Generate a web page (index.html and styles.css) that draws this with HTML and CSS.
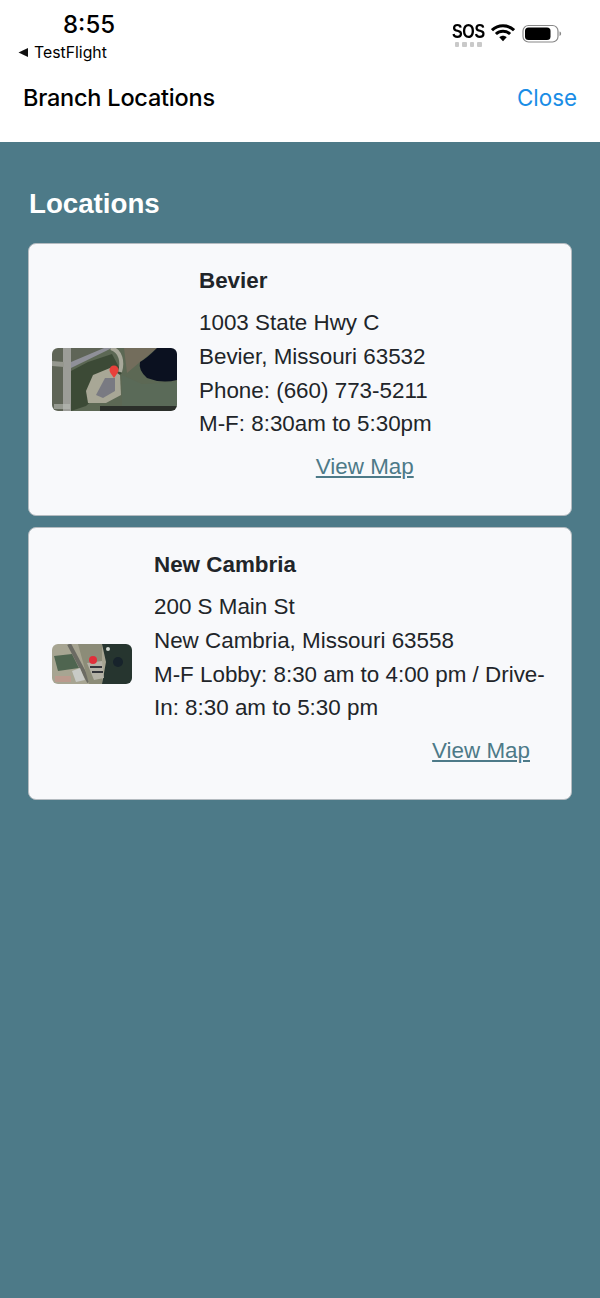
FILE: index.html
```html
<!DOCTYPE html>
<html lang="en">
<head>
<meta charset="utf-8">
<title>Branch Locations</title>
<link rel="stylesheet" href="styles.css">
</head>
<body>
<header class="top">
  <div class="status">
    <div class="status-left">
      <div class="time">8:55</div>
      <div class="back"><svg class="back-arrow" width="11" height="11" viewBox="0 0 11 11"><path d="M0.500 5.500 10 1V10Z" fill="#111"/></svg><span>TestFlight</span></div>
    </div>
    <div class="status-right">
      <div class="sos"><span class="sos-text">SOS</span>
        <span class="dots"><i></i><i></i><i></i><i></i></span></div>
      <svg class="wifi" width="24" height="18" viewBox="0 0 24 18"><path d="M1 6.200C7.200.4 16.800.4 23 6.200" fill="none" stroke="#000" stroke-width="3"/><path d="M4.900 10C9 6.200 15 6.200 19.100 10" fill="none" stroke="#000" stroke-width="3"/><path d="M8.300 13.200 12 17.200l3.700-4C13.500 11.200 10.500 11.200 8.300 13.200Z" fill="#000"/></svg>
      <svg class="battery" width="40" height="20" viewBox="0 0 40 20"><rect x="1" y="1.500" width="35" height="16.500" rx="5.500" fill="none" stroke="#888" stroke-width="1.200"/><rect x="3" y="3.500" width="25.500" height="12.500" rx="3.500" fill="#000"/><path d="M37.500 7.500c1.200.4 1.600 1.200 1.600 2.200s-.4 1.800-1.600 2.200Z" fill="#888"/></svg>
    </div>
  </div>
  <nav class="nav">
    <span class="nav-title">Branch Locations</span>
    <a class="nav-close">Close</a>
  </nav>
</header>
<main class="page">
  <h1 class="heading">Locations</h1>
  <section class="card card-a">
    <svg class="thumb" width="125" height="63" viewBox="0 0 125 63">
      <g class="photo">
        <rect width="125" height="63" fill="#5c6854"/>
        <path d="M0 0H55L20 18V63H0Z" fill="#5f6557"/>
        <path d="M72 0H105L88 14 75 25Z" fill="#736d5c"/>
        <path d="M19 23 36 14 60 6 70 25 34 58 19 63Z" fill="#3c4a36"/>
        <path d="M70 27 90 36 125 34V63H70Z" fill="#5a6a58"/>
        <path d="M105 0H125V32Q110 36 95 30 86 22 88 14 95 10 105 0Z" fill="#0b1120"/>
        <path d="M11 0H19V63H11Z" fill="#9c9d98"/>
        <path d="M0 13 12 14V19L0 18Z" fill="#96988f"/>
        <path d="M19 14 52 0H60L19 20Z" fill="#8f9098"/>
        <path d="M59 0C69 3 71 14 68 24" fill="none" stroke="#a8a89a" stroke-width="4"/>
        <path d="M34 43 41 27 58 20 68 27 69 47 54 55 36 55Z" fill="#a8a796"/>
        <path d="M44 47 53 30 63 30 63 43 51 50Z" fill="#797a82"/>
        <rect x="48" y="58" width="77" height="5" fill="#2b2f2a"/>
        <rect x="2" y="56" width="16" height="5" fill="#b9bcb6" opacity=".6"/>
      </g>
      <path d="M62 30C59 26 57.500 24 57.500 22A4.500 4.500 0 0 1 66.500 22C66.500 24 65 26 62 30Z" fill="#e8403a"/>
    </svg>
    <div class="info">
      <h2 class="name">Bevier</h2>
      <p class="line">1003 State Hwy C</p>
      <p class="line">Bevier, Missouri 63532</p>
      <p class="line">Phone: (660) 773-5211</p>
      <p class="line">M-F: 8:30am to 5:30pm</p>
      <div class="map-row"><a class="map-link">View Map</a></div>
    </div>
  </section>
  <section class="card card-b">
    <svg class="thumb" width="80" height="40" viewBox="0 0 80 40">
      <g class="photo">
        <rect width="80" height="40" fill="#a7a592"/>
        <path d="M2 12 20 10 27 24 6 27Z" fill="#4f6550"/>
        <path d="M17 0 37 38" stroke="#6b6b63" stroke-width="4"/>
        <path d="M26 0H50V40H37Z" fill="#8c8c78"/>
        <path d="M50 0H80V40H50L54 18Z" fill="#26352f"/>
        <path d="M35 19 50 17 52 34 42 36Z" fill="#b4b2a6"/>
        <path d="M38 23 50 23M40 28 51 28" stroke="#33353a" stroke-width="2"/>
        <path d="M20 27 28 24 33 36 24 38Z" fill="#c8cac6"/>
        <circle cx="56" cy="5" r="2" fill="#d4dad2"/>
        <circle cx="66" cy="18" r="5" fill="#17232b"/>
        <rect x="3" y="32" width="16" height="6" fill="#bb9b8e"/>
      </g>
      <circle cx="41" cy="16" r="4" fill="#e0303a"/>
    </svg>
    <div class="info">
      <h2 class="name">New Cambria</h2>
      <p class="line">200 S Main St</p>
      <p class="line">New Cambria, Missouri 63558</p>
      <p class="line">M-F Lobby: 8:30 am to 4:00 pm / Drive-In: 8:30 am to 5:30 pm</p>
      <div class="map-row"><a class="map-link">View Map</a></div>
    </div>
  </section>
</main>
</body>
</html>
```
FILE: styles.css
```css
* { box-sizing: border-box; }
html, body { margin: 0; height: 100%; }
body {
  display: flex;
  flex-direction: column;
  min-height: 1298px;
  background: #4d7a88;
  font-family: "Liberation Sans", Arial, sans-serif;
  color: #212529;
  overflow: hidden;
}
.top {
  height: 142px;
  background: #fff;
  color: #000;
  font-family: Inter, "Liberation Sans", sans-serif;
  padding-top: 11px;
}
.status {
  height: 63px;
  display: flex;
  justify-content: space-between;
}
.status-left { padding-left: 18px; }
.time {
  margin-left: 45px;
  font-size: 24px;
  line-height: 28px;
  font-weight: 500;
}
.back {
  display: flex;
  align-items: center;
  gap: 5px;
  margin-top: 3px;
  font-size: 15.800px;
  line-height: 21px;
}
.back-arrow { flex: none; }
.status-right {
  display: flex;
  gap: 7px;
  align-items: flex-start;
  padding: 11px 41px 0 0;
}
.sos {
  width: 30px;
  display: flex;
  flex-direction: column;
  align-items: center;
  margin-right: 1px;
}
.sos-text {
  font-family: "Liberation Sans", sans-serif;
  font-weight: 700;
  font-size: 20px;
  line-height: 18px;
  letter-spacing: -.5px;
  transform: scaleX(.8);
}
.dots { display: flex; gap: 3px; margin-top: 2px; }
.dots i { width: 4.500px; height: 4.500px; background: #c9c9c9; border-radius: 1px; }
.wifi { margin-top: 2px; }
.battery { margin-top: 2px; margin-right: -3px; }
.nav {
  display: flex;
  justify-content: space-between;
  align-items: center;
  padding: 0 23px;
  height: 46px;
}
.nav-title { font-size: 23.500px; font-weight: 500; letter-spacing: -.22px; }
.nav-close { font-size: 22.400px; line-height: 28px; padding-top: 2px; color: #1a8de6; }
.page {
  flex: 1;
  padding: 44px 28px 0;
}
.heading {
  margin: 0 0 21px 1px;
  font-size: 27.700px;
  line-height: 36px;
  font-weight: 700;
  color: #fff;
}
.card {
  height: 273px;
  margin-bottom: 11px;
  padding: 0 23px;
  display: flex;
  align-items: center;
  gap: 22px;
  background: #f8f9fb;
  border: 1px solid #b4bbc0;
  border-radius: 8px;
}
.thumb { flex: none; border-radius: 6px; }
.photo { filter: blur(.6px); }
.info { flex: 0 1 auto; min-width: 0; padding-bottom: 11px; }
.name {
  margin: 0 0 8px;
  font-size: 22.400px;
  line-height: 33.750px;
  font-weight: 700;
}
.line {
  margin: 0;
  font-size: 22.400px;
  line-height: 33.750px;
}
.map-row {
  margin-top: 9px;
  padding-right: 18px;
  text-align: right;
  font-size: 22.400px;
  line-height: 33.750px;
}
.map-link { color: #4d7a88; text-decoration: underline; }
```
